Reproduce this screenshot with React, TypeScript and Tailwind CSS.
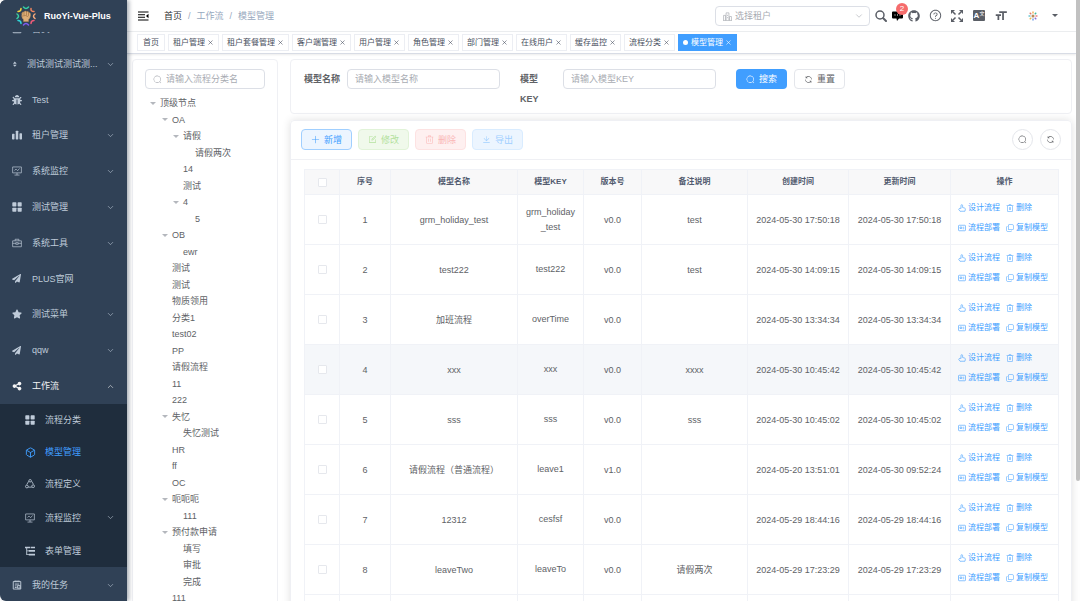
import { useState, type ReactNode } from 'react';
import { ChevronDown, ChevronUp, Box, X } from 'lucide-react';
import { FaBug, FaGithub, FaPaperPlane, FaStar } from 'react-icons/fa';
import { FaShareNodes } from 'react-icons/fa6';
import { AiOutlineQuestionCircle } from 'react-icons/ai';
import { MdFormatSize } from 'react-icons/md';

const paths = {
  search: [
    'm795.904 750.72 124.992 124.928a32 32 0 0 1-45.248 45.248L750.656 795.904a416 416 0 1 1 45.248-45.184zM480 832a352 352 0 1 0 0-704 352 352 0 0 0 0 704z',
  ],
  refresh: [
    'M771.776 794.88A384 384 0 0 1 128 512h64a320 320 0 0 0 555.712 216.448H654.72a32 32 0 1 1 0-64h149.056a32 32 0 0 1 32 32v148.928a32 32 0 1 1-64 0v-50.56zM276.288 295.616h92.992a32 32 0 0 1 0 64H220.16a32 32 0 0 1-32-32V178.56a32 32 0 0 1 64 0v50.56A384 384 0 0 1 896.128 512h-64a320 320 0 0 0-555.776-216.384z',
  ],
  plus: [
    'M480 480V128a32 32 0 0 1 64 0v352h352a32 32 0 1 1 0 64H544v352a32 32 0 1 1-64 0V544H128a32 32 0 0 1 0-64h352z',
  ],
  edit: [
    'M832 512a32 32 0 1 1 64 0v352a32 32 0 0 1-32 32H160a32 32 0 0 1-32-32V160a32 32 0 0 1 32-32h352a32 32 0 0 1 0 64H192v640h640V512z',
    'm469.952 554.24 52.8-7.552L847.104 222.4a32 32 0 1 0-45.248-45.248L477.44 501.44l-7.552 52.8zm422.4-422.4a96 96 0 0 1 0 135.808l-331.84 331.84a32 32 0 0 1-18.112 9.088L436.8 623.68a32 32 0 0 1-36.224-36.224l15.104-105.6a32 32 0 0 1 9.024-18.112l331.904-331.84a96 96 0 0 1 135.744 0z',
  ],
  trash: [
    'M160 256H96a32 32 0 0 1 0-64h256V95.936a32 32 0 0 1 32-32h256a32 32 0 0 1 32 32V192h256a32 32 0 1 1 0 64h-64v672a32 32 0 0 1-32 32H192a32 32 0 0 1-32-32V256zm448-64v-64H416v64h192zM224 896h576V256H224v640zm192-128a32 32 0 0 1-32-32V416a32 32 0 0 1 64 0v320a32 32 0 0 1-32 32zm192 0a32 32 0 0 1-32-32V416a32 32 0 0 1 64 0v320a32 32 0 0 1-32 32z',
  ],
  download: [
    'M160 832h704a32 32 0 1 1 0 64H160a32 32 0 1 1 0-64zm384-253.696 236.288-236.352 45.248 45.248L508.8 704 192 387.2l45.248-45.248L480 584.704V128h64v450.304z',
  ],
  copy: [
    'M768 832a128 128 0 0 1-128 128H192A128 128 0 0 1 64 832V384a128 128 0 0 1 128-128v64a64 64 0 0 0-64 64v448a64 64 0 0 0 64 64h448a64 64 0 0 0 64-64h64z',
    'M384 128a64 64 0 0 0-64 64v448a64 64 0 0 0 64 64h448a64 64 0 0 0 64-64V192a64 64 0 0 0-64-64H384zm0-64h448a128 128 0 0 1 128 128v448a128 128 0 0 1-128 128H384a128 128 0 0 1-128-128V192A128 128 0 0 1 384 64z',
  ],
};

function Icon({ name, className = 'size-[9px]' }: { name: keyof typeof paths; className?: string }) {
  return (
    <svg viewBox="0 0 1024 1024" fill="currentColor" className={`shrink-0 ${className}`}>
      {paths[name].map((d) => (
        <path key={d} d={d} />
      ))}
    </svg>
  );
}

const ThumbIcon = () => (
  <svg viewBox="0 0 16 16" fill="none" stroke="currentColor" strokeWidth="1.2" className="size-2 shrink-0">
    <path d="M6 9V3a1.600 1.600 0 0 1 3.200 0v4l3.800 1c1.500.4 2 1.500 1.700 2.800l-.8 3.700H4L1.500 11c-.3-1.500 1-2.500 4.500-2.500" />
  </svg>
);

const PostcardIcon = () => (
  <svg viewBox="0 0 16 16" fill="none" stroke="currentColor" strokeWidth="1.2" className="size-2 shrink-0">
    <rect x="1" y="2.500" width="14" height="11" rx="1.500" />
    <path d="M4 6h3.500v3H4zM9.500 6.500h3M9.500 9.500h3" />
  </svg>
);

const BarsIcon = () => (
  <svg viewBox="0 0 16 16" fill="currentColor" className="size-2.5">
    <rect x="0" y="6" width="4" height="9" rx="1" />
    <rect x="6" y="1" width="4" height="14" rx="1" />
    <rect x="12" y="5" width="4" height="10" rx="1" />
  </svg>
);

const GridIcon = () => (
  <svg viewBox="0 0 16 16" fill="currentColor" className="size-2.5">
    <rect x="0.500" y="0.500" width="6.500" height="6.500" rx="1" />
    <rect x="9" y="0.500" width="6.500" height="6.500" rx="1" />
    <rect x="0.500" y="9" width="6.500" height="6.500" rx="1" />
    <rect x="9" y="9" width="6.500" height="6.500" rx="1" />
  </svg>
);

const MonitorIcon = () => (
  <svg viewBox="0 0 16 16" fill="none" stroke="currentColor" strokeWidth="1.1" className="size-2.5">
    <path d="M1 1.500h14v9.500H1zM8 11v3.500M4 14.500h8M4 7l2.500-2L9 7.500l3-3.500" />
  </svg>
);

const ToolboxIcon = () => (
  <svg viewBox="0 0 16 16" fill="none" stroke="currentColor" strokeWidth="1.1" className="size-2.5">
    <path d="M1 4.500h14v9.500H1zM5 4.500v-2.500h6v2.500M1 8.500h5M10 8.500h5M6 7.500h4v2.500H6z" />
  </svg>
);

const CycleIcon = () => (
  <svg viewBox="0 0 16 16" fill="none" stroke="currentColor" strokeWidth="1.3" className="size-2.5">
    <path d="M6 3.500 2.800 9M10.500 3.500l3 5M5 13h6" />
    <circle cx="8.200" cy="2.800" r="2" />
    <circle cx="3" cy="12" r="2.200" />
    <circle cx="13" cy="11.500" r="2.200" />
  </svg>
);

const TreeTableIcon = () => (
  <svg viewBox="0 0 16 16" fill="currentColor" className="size-2.5">
    <path d="M0 1h8v2.500H0zM9 1h7v2.500H9zM6 6.500h10V9H6zM6 12.500h10V15H6zM2 3h1.500v4H6v1.500H3.500V13H6v1.500H2z" />
  </svg>
);

const TaskIcon = () => (
  <svg viewBox="0 0 16 16" fill="none" stroke="currentColor" strokeWidth="1.5" className="size-2.5">
    <path d="M2 2.500h12v12H2zM5 0.500v3M8 0.500v3M11 0.500v3M4.500 6.500h7M4.500 9.500h3M4.500 12h3" />
    <rect x="9" y="9" width="4" height="4" />
  </svg>
);

const DiamondIcon = () => (
  <svg viewBox="0 0 16 16" fill="currentColor" className="size-2.5">
    <path d="M1.500 7.500 4.500 4l3 3.500zM1.500 9l3 3.500L7.500 9z" />
  </svg>
);

const DashboardIcon = () => (
  <svg viewBox="0 0 16 16" fill="none" stroke="currentColor" strokeWidth="1.5" className="size-2.5">
    <path d="M2 14a7 7 0 1 1 12 0zM8 10l3-4" />
  </svg>
);

const Logo = () => (
  <svg viewBox="0 0 40 40" className="size-5 shrink-0" fill="none" strokeWidth="3" strokeLinecap="round">
    <path d="M15 2q5 6 10 0" stroke="#34d0a5" />
    <path d="M30 5q-1 6 6 6" stroke="#f0855f" />
    <path d="M38 16q-6 4 0 9" stroke="#f6a97a" />
    <path d="M36 29q-6 0-6 6" stroke="#ee5b78" />
    <path d="M15 38q5-6 10 0" stroke="#7d5bf0" />
    <path d="M4 29q6 0 6 6" stroke="#2fd3d8" />
    <path d="M2 16q6 4 0 9" stroke="#38cfa0" />
    <path d="M4 11q6 0 6-6" stroke="#f3d23c" />
    <path d="M12 15q0-4 4-3 2-3 5-1 4-1 5 2 4 1 3 6-1 6-4 8v4H15v-4q-5-4-3-12z" fill="#dcae78" stroke="#b98a55" strokeWidth="1" />
    <path d="M16 12v6M21 11v7M25 13v6M13 20q6-3 11 1" stroke="#8a5c30" strokeWidth="1" />
  </svg>
);

const Avatar = () => (
  <svg viewBox="0 0 20 20" className="size-2.5" fill="none" strokeWidth="2.500">
    <path d="M10 1v4" stroke="#f2a33c" />
    <path d="m16.500 3.500-3 3" stroke="#3fb79a" />
    <path d="M19 10h-4" stroke="#e46a6a" />
    <path d="m16.500 16.500-3-3" stroke="#8d6fd1" />
    <path d="M10 19v-4" stroke="#5b8fe0" />
    <path d="m3.500 16.500 3-3" stroke="#e5b64c" />
    <path d="M1 10h4" stroke="#4fb9c9" />
    <path d="m3.500 3.500 3 3" stroke="#e0786a" />
    <circle cx="10" cy="10" r="3" fill="#b98a5a" />
  </svg>
);

interface MenuItem {
  label: string;
  icon: ReactNode;
  children?: boolean;
}

const topMenu: MenuItem[] = [
  { label: '首页', icon: <DashboardIcon /> },
  { label: '测试测试测试测...', icon: <DiamondIcon />, children: true },
  { label: 'Test', icon: <FaBug size={10} /> },
  { label: '租户管理', icon: <BarsIcon />, children: true },
  { label: '系统监控', icon: <MonitorIcon />, children: true },
  { label: '测试管理', icon: <GridIcon />, children: true },
  { label: '系统工具', icon: <ToolboxIcon />, children: true },
  { label: 'PLUS官网', icon: <FaPaperPlane size={9} /> },
  { label: '测试菜单', icon: <FaStar size={10} />, children: true },
  { label: 'qqw', icon: <FaPaperPlane size={9} />, children: true },
];

const flowMenu: MenuItem[] = [
  { label: '流程分类', icon: <GridIcon /> },
  { label: '模型管理', icon: <Box size={11} /> },
  { label: '流程定义', icon: <CycleIcon /> },
  { label: '流程监控', icon: <MonitorIcon />, children: true },
  { label: '表单管理', icon: <TreeTableIcon /> },
];

function MenuRow({ item, nested = false, active = false, open = false }: {
  item: MenuItem;
  nested?: boolean;
  active?: boolean;
  open?: boolean;
}) {
  const height = nested ? (item.children ? 'h-[35px]' : 'h-8') : item.children ? 'h-9' : 'h-[35px]';
  const color = active ? 'text-[#409eff]' : open ? 'text-[#f4f4f5]' : 'text-[#bfcbd9]';
  const Chevron = open ? ChevronUp : ChevronDown;
  return (
    <a href="#" className={`flex shrink-0 items-center pr-3 whitespace-nowrap ${height} ${color} ${nested ? 'pl-[25px]' : 'pl-3'}`}>
      <span className={`flex shrink-0 ${item.label.length > 8 ? 'w-[15px]' : 'w-5'}`}>{item.icon}</span>
      {item.label}
      {item.children && <Chevron size={9} strokeWidth={1.5} className="ml-auto shrink-0" />}
    </a>
  );
}

function Sidebar() {
  return (
    <aside className="z-10 flex w-[127px] shrink-0 flex-col overflow-hidden rounded-l-md bg-[#304156] shadow-[2px_0_4px_rgba(0,21,41,0.35)]">
      <a href="#" className="z-10 flex h-8 shrink-0 items-center gap-2 bg-[#304156] pl-4 font-bold text-white">
        <Logo />
        RuoYi-Vue-Plus
      </a>
      {/* the menu is scrolled part of the way down */}
      <nav className="-mt-[21px] flex flex-col">
        {topMenu.map((item) => (
          <MenuRow key={item.label} item={item} />
        ))}
        <MenuRow item={{ label: '工作流', icon: <FaShareNodes size={10} />, children: true }} open />
        <div className="bg-[#1f2d3d]">
          {flowMenu.map((item) => (
            <MenuRow key={item.label} item={item} nested active={item.label === '模型管理'} />
          ))}
        </div>
        <MenuRow item={{ label: '我的任务', icon: <TaskIcon />, children: true }} />
      </nav>
    </aside>
  );
}

function Navbar() {
  return (
    <header className="flex h-8 shrink-0 items-center border-b border-[#eceef0] pr-[18px] pl-[11px] text-[#5a5e66]">
      <button aria-label="折叠菜单" className="text-black">
        <svg viewBox="0 0 22 20" className="h-2.5 w-[11px]" fill="currentColor">
          <path d="M0 1h21v2.200H0zM0 6.500h14v2.200H0zM0 11.500h14v2.200H0zM0 17h21v2.200H0zM21 5.500v9L16 10z" />
        </svg>
      </button>
      <nav className="ml-[15px] flex items-center gap-[6px]">
        <a href="#" className="text-[#303133]">首页</a>
        <span className="text-[#97a8be]">/</span>
        <span className="text-[#97a8be]">工作流</span>
        <span className="text-[#97a8be]">/</span>
        <span className="text-[#97a8be]">模型管理</span>
      </nav>

      <div className="ml-auto flex items-center">
        <div className="relative mr-[5px] text-[#a8abb2]">
          <svg viewBox="0 0 16 16" fill="none" stroke="currentColor" strokeWidth="1.200" className="pointer-events-none absolute top-[6px] left-2 size-[9px]">
            <path d="M1 15V6h3.500v9M5.500 15V1.500h5V15M11.500 15V8H15v7M0 15h16M8 5v2M8 9v2" />
          </svg>
          <select
            aria-label="选择租户"
            className="h-5 w-[155px] appearance-none rounded-sm border border-[#dcdfe6] bg-white pl-[19px] outline-none"
          >
            <option>选择租户</option>
          </select>
          <ChevronDown size={10} strokeWidth={1.5} className="pointer-events-none absolute top-[5px] right-[6px]" />
        </div>
        <button aria-label="搜索">
          <svg viewBox="0 0 24 24" fill="none" stroke="currentColor" strokeWidth="3" strokeLinecap="round" className="size-3">
            <circle cx="10" cy="10" r="8" />
            <path d="m16.500 16.500 5.500 5.500" strokeWidth="4" />
          </svg>
        </button>
        <button aria-label="消息" className="relative ml-[5px] text-black">
          <svg viewBox="0 0 22 22" fill="currentColor" className="size-[11px]">
            <path d="M2 3h18a2 2 0 0 1 2 2v10a2 2 0 0 1-2 2h-6l-4 5-1-5H2a2 2 0 0 1-2-2V5a2 2 0 0 1 2-2z" />
            <path d="M5 9h2v2H5zM10 9h2v2h-2zM15 9h2v2h-2z" fill="#fff" />
          </svg>
          <span className="absolute -top-[7px] left-1 flex size-3 items-center justify-center rounded-full bg-[#f56c6c] text-[8px] leading-none text-white">2</span>
        </button>
        <button aria-label="GitHub" className="ml-[5px]"><FaGithub size={12} /></button>
        <button aria-label="帮助" className="ml-[9px]"><AiOutlineQuestionCircle size={13} /></button>
        <button aria-label="全屏" className="ml-[9px]">
          <svg viewBox="0 0 24 24" className="size-3" fill="currentColor" stroke="currentColor" strokeWidth="3">
            <path d="m4 4 5 5M20 4l-5 5M4 20l5-5M20 20l-5-5" />
            <path stroke="none" d="M0 0h8L0 8zM24 0v8l-8-8zM0 24v-8l8 8zM24 24h-8l8-8z" />
          </svg>
        </button>
        <button aria-label="语言" className="ml-[10px] flex h-[11px] w-3 items-start justify-center rounded-[1px] bg-[#5a5e66] text-white">
          <b className="text-[8px] leading-[12px]">A</b>
          <span className="text-[5px] leading-[7px]">文</span>
        </button>
        <button aria-label="布局大小" className="ml-[9px]"><MdFormatSize size={14} /></button>
        <button aria-label="用户" className="ml-5 flex items-center gap-[14px]">
          <Avatar />
          <span className="border-x-[3px] border-t-[3px] border-x-transparent border-t-[#5a5e66]" />
        </button>
      </div>
    </header>
  );
}

const tags = ['首页', '租户管理', '租户套餐管理', '客户端管理', '用户管理', '角色管理', '部门管理', '在线用户', '缓存监控', '流程分类', '模型管理'];

function TagsView() {
  return (
    <div className="flex h-[22px] shrink-0 items-center gap-[3px] border-b border-[#d8dce5] pl-[10px] text-[8px] shadow-[0_1px_2px_rgba(0,0,0,0.08)]">
      {tags.map((tag) => {
        const active = tag === '模型管理';
        const fixed = tag === '首页';
        return (
          <a
            key={tag}
            href="#"
            className={`flex h-[17px] items-center border whitespace-nowrap ${fixed ? 'px-[5px]' : 'px-1'} ${active ? 'border-[#409eff] bg-[#409eff] text-white' : 'border-[#eceef3] bg-white text-[#495060]'}`}
          >
            {active && <span className="mr-[3px] size-[5px] rounded-full bg-white" />}
            {tag}
            {!fixed && <X size={7} strokeWidth={2} className="ml-0.5" />}
          </a>
        );
      })}
    </div>
  );
}

interface TreeNode {
  label: string;
  level: number;
  open?: boolean;
}

const tree: TreeNode[] = [
  { label: '顶级节点', level: 0, open: true },
  { label: 'OA', level: 1, open: true },
  { label: '请假', level: 2, open: true },
  { label: '请假两次', level: 3 },
  { label: '14', level: 2 },
  { label: '测试', level: 2 },
  { label: '4', level: 2, open: true },
  { label: '5', level: 3 },
  { label: 'OB', level: 1, open: true },
  { label: 'ewr', level: 2 },
  { label: '测试', level: 1 },
  { label: '测试', level: 1 },
  { label: '物质领用', level: 1 },
  { label: '分类1', level: 1 },
  { label: 'test02', level: 1 },
  { label: 'PP', level: 1 },
  { label: '请假流程', level: 1 },
  { label: '11', level: 1 },
  { label: '222', level: 1 },
  { label: '失忆', level: 1, open: true },
  { label: '失忆测试', level: 2 },
  { label: 'HR', level: 1 },
  { label: 'ff', level: 1 },
  { label: 'OC', level: 1 },
  { label: '呃呃呃', level: 1, open: true },
  { label: '111', level: 2 },
  { label: '预付款申请', level: 1, open: true },
  { label: '填写', level: 2 },
  { label: '审批', level: 2 },
  { label: '完成', level: 2 },
  { label: '111', level: 1 },
];

const indents = ['pl-[5px]', 'pl-[17px]', 'pl-7', 'pl-10'];

function CategoryTree() {
  return (
    <section className="w-[146px] shrink-0 rounded-sm border border-[#eff0f4] px-3 pt-[9px]">
      <label className="flex h-5 items-center gap-1 rounded-sm border border-[#dcdfe6] px-[7px] text-[#a8abb2]">
        <Icon name="search" />
        <input
          aria-label="流程分类名"
          placeholder="请输入流程分类名"
          className="w-full min-w-0 text-[#606266] outline-none placeholder:text-[#a8abb2]"
        />
      </label>
      <ul className="mt-[6px] text-[#606266]">
        {tree.map((node, i) => (
          <li key={i} className={`flex h-[17px] items-center odd:h-4 ${indents[node.level]}`}>
            <span className="w-[10px] shrink-0">
              {node.open && <span className="block w-[6px] border-x-[3px] border-t-[3px] border-x-transparent border-t-[#b4b7bd]" />}
            </span>
            {node.label}
          </li>
        ))}
      </ul>
    </section>
  );
}

function SearchForm() {
  const [name, setName] = useState('');
  const [key, setKey] = useState('');
  const input = 'h-5 w-[153px] rounded-sm border border-[#dcdfe6] px-[7px] text-[#606266] outline-none placeholder:text-[#a8abb2]';
  return (
    <form className="flex items-start rounded-sm border border-[#eff0f4] px-[13px] pt-[9px] pb-1 leading-5">
      <label htmlFor="model-name" className="w-[43px] shrink-0 font-bold text-[#606266]">模型名称</label>
      <input id="model-name" className={input} placeholder="请输入模型名称" value={name} onChange={(e) => setName(e.target.value)} />
      <label htmlFor="model-key" className="ml-5 w-[43px] shrink-0 pr-5 font-bold text-[#606266]">模型 KEY</label>
      <input id="model-key" className={input} placeholder="请输入模型KEY" value={key} onChange={(e) => setKey(e.target.value)} />
      <button type="button" className="ml-5 flex h-5 w-[51px] items-center justify-center gap-1 rounded-sm bg-[#409eff] text-white">
        <Icon name="search" />
        搜索
      </button>
      <button type="reset" className="ml-[7px] flex h-5 w-[51px] items-center justify-center gap-1 rounded-sm border border-[#e4e6eb] text-[#606266]">
        <Icon name="refresh" />
        重置
      </button>
    </form>
  );
}

const actions: { label: string; icon: keyof typeof paths; style: string }[] = [
  { label: '新增', icon: 'plus', style: 'border-[#a0cfff] bg-[#ecf5ff] text-[#409eff]' },
  { label: '修改', icon: 'edit', style: 'border-[#e1f3d8] bg-[#f0f9eb] text-[#b3e19d]' },
  { label: '删除', icon: 'trash', style: 'border-[#fde2e2] bg-[#fef0f0] text-[#fab6b6]' },
  { label: '导出', icon: 'download', style: 'border-[#d9ecff] bg-[#ecf5ff] text-[#a0cfff]' },
];

const columns = [
  { title: '', width: 'w-[35px]' },
  { title: '序号', width: 'w-[51px]' },
  { title: '模型名称', width: 'w-[127px]' },
  { title: '模型KEY', width: 'w-[66px]' },
  { title: '版本号', width: 'w-[58px]' },
  { title: '备注说明', width: 'w-[106px]' },
  { title: '创建时间', width: 'w-[101px]' },
  { title: '更新时间', width: 'w-[102px]' },
  { title: '操作', width: 'w-[108px]' },
];

interface Model {
  name: string;
  key: string;
  version: string;
  remark: string;
  created: string;
  updated: string;
}

const models: Model[] = [
  { name: 'grm_holiday_test', key: 'grm_holiday_test', version: 'v0.0', remark: 'test', created: '2024-05-30 17:50:18', updated: '2024-05-30 17:50:18' },
  { name: 'test222', key: 'test222', version: 'v0.0', remark: 'test', created: '2024-05-30 14:09:15', updated: '2024-05-30 14:09:15' },
  { name: '加班流程', key: 'overTime', version: 'v0.0', remark: '', created: '2024-05-30 13:34:34', updated: '2024-05-30 13:34:34' },
  { name: 'xxx', key: 'xxx', version: 'v0.0', remark: 'xxxx', created: '2024-05-30 10:45:42', updated: '2024-05-30 10:45:42' },
  { name: 'sss', key: 'sss', version: 'v0.0', remark: 'sss', created: '2024-05-30 10:45:02', updated: '2024-05-30 10:45:02' },
  { name: '请假流程（普通流程）', key: 'leave1', version: 'v1.0', remark: '', created: '2024-05-20 13:51:01', updated: '2024-05-30 09:52:24' },
  { name: '12312', key: 'cesfsf', version: 'v0.0', remark: '', created: '2024-05-29 18:44:16', updated: '2024-05-29 18:44:16' },
  { name: 'leaveTwo', key: 'leaveTo', version: 'v0.0', remark: '请假两次', created: '2024-05-29 17:23:29', updated: '2024-05-29 17:23:29' },
];

function Checkbox({ label }: { label: string }) {
  return (
    <input
      type="checkbox"
      aria-label={label}
      className="mx-auto block size-[9px] appearance-none rounded-[1px] border border-[#e6e8ed] bg-white checked:bg-[#409eff]"
    />
  );
}

function ModelTable() {
  const cell = 'border border-[#f0f2f7]';
  return (
    <table className="w-full table-fixed border-collapse text-center text-[#606266]">
      <thead className="bg-[#f8f8f9] text-[8px] text-[#515a6e]">
        <tr className="h-[25px]">
          {columns.map((col) => (
            <th key={col.title} className={`${cell} p-0 font-bold ${col.width}`}>
              {col.title || <Checkbox label="全选" />}
            </th>
          ))}
        </tr>
      </thead>
      <tbody>
        {models.map((m, i) => (
          <tr key={m.name} className={`h-[50px] ${i === 3 ? 'bg-[#f5f7fa]' : ''}`}>
            <td className={cell}><Checkbox label={`选择 ${m.name}`} /></td>
            <td className={cell}>{i + 1}</td>
            <td className={cell}>{m.name}</td>
            <td className={`${cell} px-1.5 leading-[15px] break-all`}>{m.key}</td>
            <td className={cell}>{m.version}</td>
            <td className={cell}>{m.remark}</td>
            <td className={`${cell} whitespace-nowrap`}>{m.created}</td>
            <td className={`${cell} whitespace-nowrap`}>{m.updated}</td>
            <td className={`${cell} pb-1 pl-[7px]`}>
              <div className="grid grid-cols-[41px_auto] justify-start gap-x-[7px] text-[8px] leading-5 whitespace-nowrap text-[#409eff]">
                <button className="flex items-center gap-0.5"><ThumbIcon />设计流程</button>
                <button className="flex items-center gap-0.5"><Icon name="trash" className="size-2" />删除</button>
                <button className="flex items-center gap-0.5"><PostcardIcon />流程部署</button>
                <button className="flex items-center gap-0.5"><Icon name="copy" className="size-2" />复制模型</button>
              </div>
            </td>
          </tr>
        ))}
        <tr className="h-[50px]">
          {columns.map((col) => (
            <td key={col.title} className={cell} />
          ))}
        </tr>
      </tbody>
    </table>
  );
}

export default function App() {
  return (
    <div className="flex h-screen overflow-hidden bg-white font-['Liberation_Sans','Noto_Sans_CJK_SC',sans-serif] text-[9px] leading-[14px]">
      <Sidebar />
      <div className="flex min-w-0 flex-1 flex-col">
        <Navbar />
        <TagsView />
        <main className="flex min-h-0 flex-1 items-start gap-3 pt-[5px] pr-1 pl-[5px]">
          <CategoryTree />
          <div className="min-w-0 flex-1">
            <SearchForm />
            <section className="mt-[6px] rounded-sm border border-[#eff0f4] shadow-[0_0_8px_rgba(0,0,0,0.12)]">
              <div className="flex items-center gap-[6px] border-b border-[#eff0f4] px-[10px] pt-2 pb-[9px]">
                {actions.map((a) => (
                  <button
                    key={a.label}
                    disabled={a.label !== '新增'}
                    className={`flex h-[21px] w-[51px] items-center justify-center gap-1 rounded-sm border ${a.style}`}
                  >
                    <Icon name={a.icon} />
                    {a.label}
                  </button>
                ))}
                <button aria-label="显示搜索" className="ml-auto flex size-[21px] items-center justify-center rounded-full border border-[#e4e6eb] text-[#606266]">
                  <Icon name="search" />
                </button>
                <button aria-label="刷新" className="ml-px flex size-[21px] items-center justify-center rounded-full border border-[#e4e6eb] text-[#606266]">
                  <Icon name="refresh" />
                </button>
              </div>
              <div className="px-[13px] pt-[9px]">
                <ModelTable />
              </div>
            </section>
          </div>
        </main>
      </div>
      <div className="w-1 shrink-0">
        <div className="h-4/5 rounded-b-sm bg-[#c1c1c1]" />
      </div>
    </div>
  );
}
